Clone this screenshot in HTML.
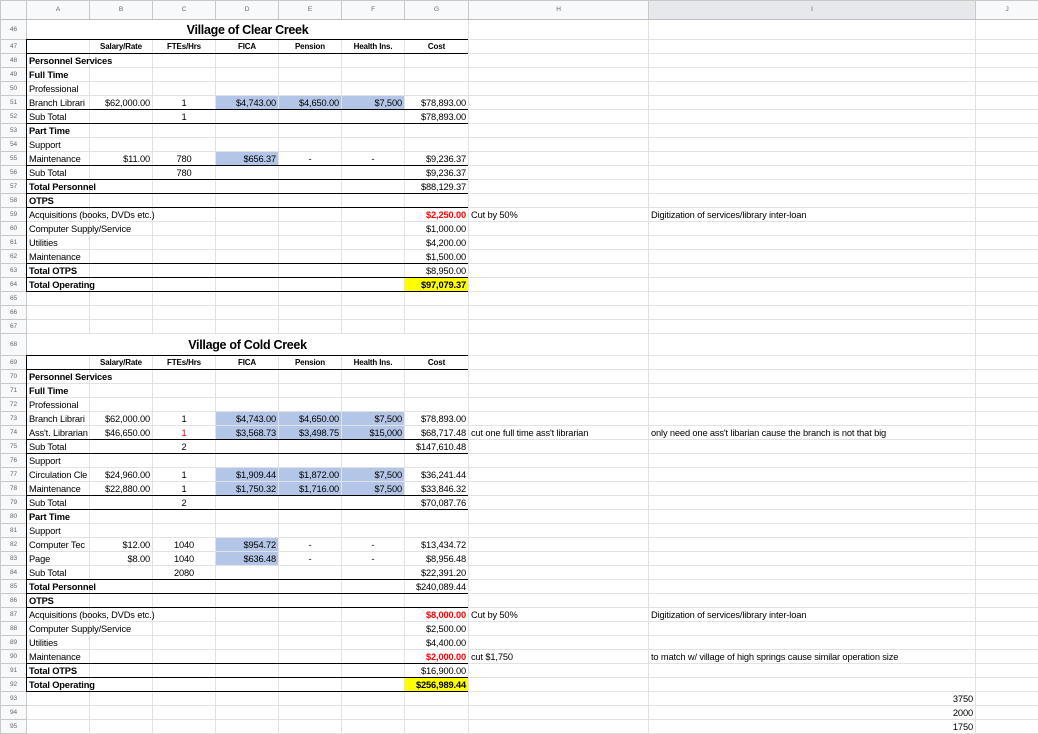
<!DOCTYPE html>
<html><head><meta charset="utf-8"><style>
*{margin:0;padding:0;box-sizing:border-box}
body{width:1038px;height:733px;overflow:hidden;background:#fff;font-family:"Liberation Sans",Arial,sans-serif;position:relative}
table{border-collapse:collapse;table-layout:fixed;width:1038px;position:absolute;left:0;top:0}
td,th{border:1px solid #e2e2e2;white-space:nowrap;overflow:visible;padding:0 2px;font-size:9.3px;letter-spacing:-0.15px;line-height:12px;color:#000;font-weight:normal;vertical-align:bottom}
th{background:#f8f9fa;color:#666;font-size:6.5px;text-align:center;border-color:#c8c8c8;vertical-align:middle}
tr.h th{height:19px;border-bottom:1px solid #bdbdbd}
tr.h th.sel{background:#e6e8ec}
tr{height:14px}
tr.t{height:20px}
tr.t2{height:22px}
.r{text-align:right}.c{text-align:center}.b{font-weight:bold}
.bl{background:#b4c6e7}.y{background:#ffff00;font-weight:bold}.red{color:#f00}
.clip{overflow:hidden}
.ti{font-size:12.5px;font-weight:bold;text-align:center;letter-spacing:-0.3px;vertical-align:middle}
.hd{font-size:8px;font-weight:bold;text-align:center}
.ln{position:absolute;height:1px;background:#000;left:26px;width:442px}
.vl{position:absolute;width:1px;background:#000;left:26px}
</style></head><body>
<table>
<colgroup><col style="width:26px"><col style="width:63px"><col style="width:63px"><col style="width:63px"><col style="width:63px"><col style="width:63px"><col style="width:63px"><col style="width:64px"><col style="width:180px"><col style="width:327px"><col style="width:63px"></colgroup>
<tr class="h"><th></th><th>A</th><th>B</th><th>C</th><th>D</th><th>E</th><th>F</th><th>G</th><th>H</th><th class="sel">I</th><th>J</th></tr>
<tr class="t"><th>46</th><td colspan="7" class="ti">Village of Clear Creek</td><td></td><td></td><td></td></tr>
<tr><th>47</th><td></td><td class="hd">Salary/Rate</td><td class="hd">FTEs/Hrs</td><td class="hd">FICA</td><td class="hd">Pension</td><td class="hd">Health Ins.</td><td class="hd">Cost</td><td></td><td></td><td></td></tr>
<tr><th>48</th><td class="b">Personnel Services</td><td></td><td></td><td></td><td></td><td></td><td></td><td></td><td></td><td></td></tr>
<tr><th>49</th><td class="b">Full Time</td><td></td><td></td><td></td><td></td><td></td><td></td><td></td><td></td><td></td></tr>
<tr><th>50</th><td>Professional</td><td></td><td></td><td></td><td></td><td></td><td></td><td></td><td></td><td></td></tr>
<tr><th>51</th><td class="clip">Branch Librari</td><td class="r">$62,000.00</td><td class="c">1</td><td class="r bl">$4,743.00</td><td class="r bl">$4,650.00</td><td class="r bl">$7,500</td><td class="r">$78,893.00</td><td></td><td></td><td></td></tr>
<tr><th>52</th><td>Sub Total</td><td></td><td class="c">1</td><td></td><td></td><td></td><td class="r">$78,893.00</td><td></td><td></td><td></td></tr>
<tr><th>53</th><td class="b">Part Time</td><td></td><td></td><td></td><td></td><td></td><td></td><td></td><td></td><td></td></tr>
<tr><th>54</th><td>Support</td><td></td><td></td><td></td><td></td><td></td><td></td><td></td><td></td><td></td></tr>
<tr><th>55</th><td>Maintenance</td><td class="r">$11.00</td><td class="c">780</td><td class="r bl">$656.37</td><td class="c">-</td><td class="c">-</td><td class="r">$9,236.37</td><td></td><td></td><td></td></tr>
<tr><th>56</th><td>Sub Total</td><td></td><td class="c">780</td><td></td><td></td><td></td><td class="r">$9,236.37</td><td></td><td></td><td></td></tr>
<tr><th>57</th><td class="b">Total Personnel</td><td></td><td></td><td></td><td></td><td></td><td class="r">$88,129.37</td><td></td><td></td><td></td></tr>
<tr><th>58</th><td class="b">OTPS</td><td></td><td></td><td></td><td></td><td></td><td></td><td></td><td></td><td></td></tr>
<tr><th>59</th><td>Acquisitions (books, DVDs etc.)</td><td></td><td></td><td></td><td></td><td></td><td class="r red b">$2,250.00</td><td>Cut by 50%</td><td>Digitization of services/library inter-loan</td><td></td></tr>
<tr><th>60</th><td>Computer Supply/Service</td><td></td><td></td><td></td><td></td><td></td><td class="r">$1,000.00</td><td></td><td></td><td></td></tr>
<tr><th>61</th><td>Utilities</td><td></td><td></td><td></td><td></td><td></td><td class="r">$4,200.00</td><td></td><td></td><td></td></tr>
<tr><th>62</th><td>Maintenance</td><td></td><td></td><td></td><td></td><td></td><td class="r">$1,500.00</td><td></td><td></td><td></td></tr>
<tr><th>63</th><td class="b">Total OTPS</td><td></td><td></td><td></td><td></td><td></td><td class="r">$8,950.00</td><td></td><td></td><td></td></tr>
<tr><th>64</th><td class="b">Total Operating</td><td></td><td></td><td></td><td></td><td></td><td class="r y">$97,079.37</td><td></td><td></td><td></td></tr>
<tr><th>65</th><td></td><td></td><td></td><td></td><td></td><td></td><td></td><td></td><td></td><td></td></tr>
<tr><th>66</th><td></td><td></td><td></td><td></td><td></td><td></td><td></td><td></td><td></td><td></td></tr>
<tr><th>67</th><td></td><td></td><td></td><td></td><td></td><td></td><td></td><td></td><td></td><td></td></tr>
<tr class="t2"><th>68</th><td colspan="7" class="ti">Village of Cold Creek</td><td></td><td></td><td></td></tr>
<tr><th>69</th><td></td><td class="hd">Salary/Rate</td><td class="hd">FTEs/Hrs</td><td class="hd">FICA</td><td class="hd">Pension</td><td class="hd">Health Ins.</td><td class="hd">Cost</td><td></td><td></td><td></td></tr>
<tr><th>70</th><td class="b">Personnel Services</td><td></td><td></td><td></td><td></td><td></td><td></td><td></td><td></td><td></td></tr>
<tr><th>71</th><td class="b">Full Time</td><td></td><td></td><td></td><td></td><td></td><td></td><td></td><td></td><td></td></tr>
<tr><th>72</th><td>Professional</td><td></td><td></td><td></td><td></td><td></td><td></td><td></td><td></td><td></td></tr>
<tr><th>73</th><td class="clip">Branch Librari</td><td class="r">$62,000.00</td><td class="c">1</td><td class="r bl">$4,743.00</td><td class="r bl">$4,650.00</td><td class="r bl">$7,500</td><td class="r">$78,893.00</td><td></td><td></td><td></td></tr>
<tr><th>74</th><td class="clip">Ass't. Librarian</td><td class="r">$46,650.00</td><td class="c red">1</td><td class="r bl">$3,568.73</td><td class="r bl">$3,498.75</td><td class="r bl">$15,000</td><td class="r">$68,717.48</td><td>cut one full time ass't librarian</td><td>only need one ass't libarian cause the branch is not that big</td><td></td></tr>
<tr><th>75</th><td>Sub Total</td><td></td><td class="c">2</td><td></td><td></td><td></td><td class="r">$147,610.48</td><td></td><td></td><td></td></tr>
<tr><th>76</th><td>Support</td><td></td><td></td><td></td><td></td><td></td><td></td><td></td><td></td><td></td></tr>
<tr><th>77</th><td class="clip">Circulation Cle</td><td class="r">$24,960.00</td><td class="c">1</td><td class="r bl">$1,909.44</td><td class="r bl">$1,872.00</td><td class="r bl">$7,500</td><td class="r">$36,241.44</td><td></td><td></td><td></td></tr>
<tr><th>78</th><td>Maintenance</td><td class="r">$22,880.00</td><td class="c">1</td><td class="r bl">$1,750.32</td><td class="r bl">$1,716.00</td><td class="r bl">$7,500</td><td class="r">$33,846.32</td><td></td><td></td><td></td></tr>
<tr><th>79</th><td>Sub Total</td><td></td><td class="c">2</td><td></td><td></td><td></td><td class="r">$70,087.76</td><td></td><td></td><td></td></tr>
<tr><th>80</th><td class="b">Part Time</td><td></td><td></td><td></td><td></td><td></td><td></td><td></td><td></td><td></td></tr>
<tr><th>81</th><td>Support</td><td></td><td></td><td></td><td></td><td></td><td></td><td></td><td></td><td></td></tr>
<tr><th>82</th><td class="clip">Computer Tec</td><td class="r">$12.00</td><td class="c">1040</td><td class="r bl">$954.72</td><td class="c">-</td><td class="c">-</td><td class="r">$13,434.72</td><td></td><td></td><td></td></tr>
<tr><th>83</th><td>Page</td><td class="r">$8.00</td><td class="c">1040</td><td class="r bl">$636.48</td><td class="c">-</td><td class="c">-</td><td class="r">$8,956.48</td><td></td><td></td><td></td></tr>
<tr><th>84</th><td>Sub Total</td><td></td><td class="c">2080</td><td></td><td></td><td></td><td class="r">$22,391.20</td><td></td><td></td><td></td></tr>
<tr><th>85</th><td class="b">Total Personnel</td><td></td><td></td><td></td><td></td><td></td><td class="r">$240,089.44</td><td></td><td></td><td></td></tr>
<tr><th>86</th><td class="b">OTPS</td><td></td><td></td><td></td><td></td><td></td><td></td><td></td><td></td><td></td></tr>
<tr><th>87</th><td>Acquisitions (books, DVDs etc.)</td><td></td><td></td><td></td><td></td><td></td><td class="r red b">$8,000.00</td><td>Cut by 50%</td><td>Digitization of services/library inter-loan</td><td></td></tr>
<tr><th>88</th><td>Computer Supply/Service</td><td></td><td></td><td></td><td></td><td></td><td class="r">$2,500.00</td><td></td><td></td><td></td></tr>
<tr><th>89</th><td>Utilities</td><td></td><td></td><td></td><td></td><td></td><td class="r">$4,400.00</td><td></td><td></td><td></td></tr>
<tr><th>90</th><td>Maintenance</td><td></td><td></td><td></td><td></td><td></td><td class="r red b">$2,000.00</td><td>cut $1,750</td><td>to match w/ village of high springs cause similar operation size</td><td></td></tr>
<tr><th>91</th><td class="b">Total OTPS</td><td></td><td></td><td></td><td></td><td></td><td class="r">$16,900.00</td><td></td><td></td><td></td></tr>
<tr><th>92</th><td class="b">Total Operating</td><td></td><td></td><td></td><td></td><td></td><td class="r y">$256,989.44</td><td></td><td></td><td></td></tr>
<tr><th>93</th><td></td><td></td><td></td><td></td><td></td><td></td><td></td><td></td><td class="r">3750</td><td></td></tr>
<tr><th>94</th><td></td><td></td><td></td><td></td><td></td><td></td><td></td><td></td><td class="r">2000</td><td></td></tr>
<tr><th>95</th><td></td><td></td><td></td><td></td><td></td><td></td><td></td><td></td><td class="r">1750</td><td></td></tr>
</table>
<div class="vl" style="top:39px;height:253px"></div>
<div class="ln" style="top:39px"></div><div class="ln" style="top:53px"></div><div class="ln" style="top:109px"></div><div class="ln" style="top:123px"></div><div class="ln" style="top:165px"></div><div class="ln" style="top:179px"></div><div class="ln" style="top:193px"></div><div class="ln" style="top:207px"></div><div class="ln" style="top:263px"></div><div class="ln" style="top:277px"></div><div class="ln" style="top:291px"></div>
<div class="vl" style="top:355px;height:337px"></div>
<div class="ln" style="top:355px"></div><div class="ln" style="top:369px"></div><div class="ln" style="top:439px"></div><div class="ln" style="top:453px"></div><div class="ln" style="top:495px"></div><div class="ln" style="top:509px"></div><div class="ln" style="top:579px"></div><div class="ln" style="top:593px"></div><div class="ln" style="top:607px"></div><div class="ln" style="top:663px"></div><div class="ln" style="top:677px"></div><div class="ln" style="top:691px"></div>
</body></html>
